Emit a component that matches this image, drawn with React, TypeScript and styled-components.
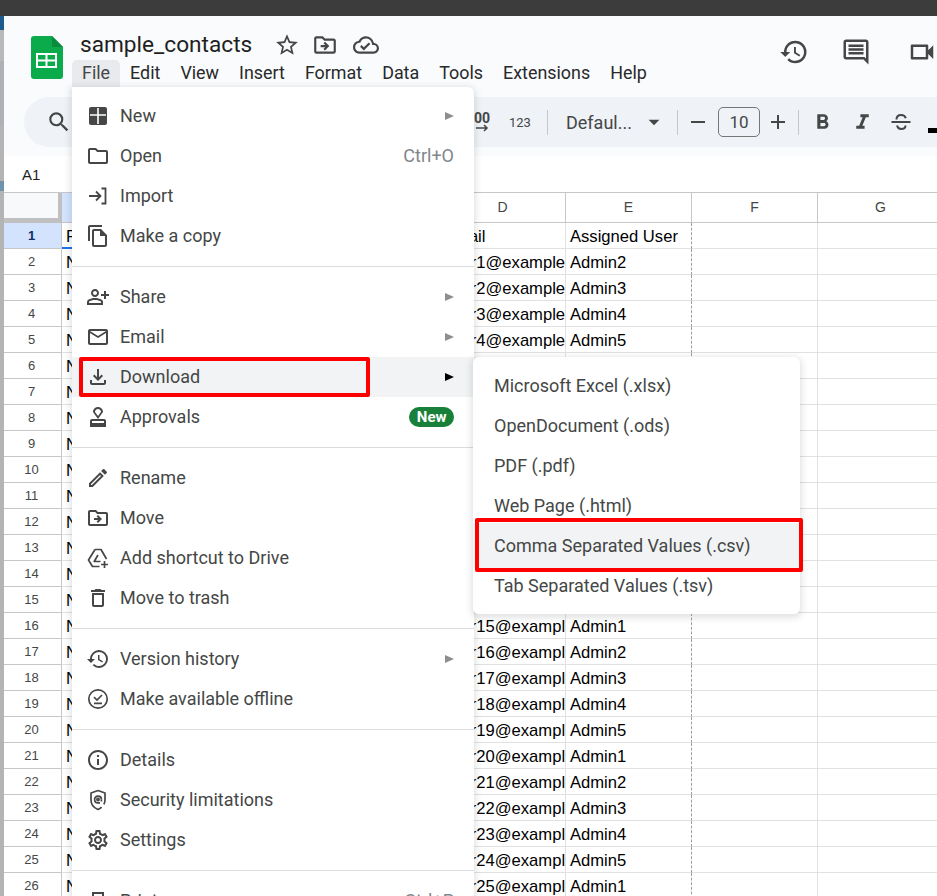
import React from "react";
import styled, { createGlobalStyle } from "styled-components";
import {
  MdStarBorder, MdOutlineDriveFileMove, MdOutlineCloudDone, MdHistory, MdOutlineComment, MdOutlineVideocam,
  MdSearch, MdOutlineFolder, MdOutlineFileCopy, MdOutlinePersonAddAlt, MdOutlineEmail, MdOutlineFileDownload,
  MdOutlineApproval, MdOutlineEdit, MdOutlineDelete, MdInfoOutline,
  MdOutlineSettings, MdOutlinePrint, MdFormatBold, MdFormatItalic, MdRemove, MdAdd, MdArrowDropDown,
} from "react-icons/md";

const Global = createGlobalStyle`
  html, body { margin: 0; padding: 0; background: #fff; }
  * { box-sizing: border-box; }
`;

const Page = styled.div`
  position: relative; width: 937px; height: 896px; overflow: hidden; display: flex; flex-direction: column;
  font-family: Roboto, "Liberation Sans", sans-serif; color: #444746; background: #fff;
`;
const TopBar = styled.div`flex: none; height: 16px; background: #3c3c3c;`;
const Body = styled.div`flex: 1; display: flex; min-height: 0;`;
const LeftStrip = styled.div`
  flex: none; width: 4px;
  background: linear-gradient(#1f5a8c 0, #1f5a8c 14px, #b9b9b9 14px, #b9b9b9 45px, #aeb2b6 45px, #aeb2b6 110px, #b4b4b4 110px, #b4b4b4 165px, #6f93ad 165px, #6f93ad 175px, #b4b4b4 175px, #b4b4b4 880px);
`;
const Sheet = styled.div`flex: 1; min-width: 0; display: flex; flex-direction: column;`;
const Header = styled.header`flex: none; height: 140px; background: #f9fbfd; display: flex; flex-direction: column;`;
const HeaderTop = styled.div`flex: none; height: 81px; display: flex; padding-left: 27px; position: relative;`;
const LogoWrap = styled.div`flex: none; width: 32px; margin-top: 20px; height: 43px;`;
const TitleBlock = styled.div`flex: none; margin-left: 9px; display: flex; flex-direction: column;`;
const TitleRow = styled.div`height: 44px; padding: 14px 0 0 8px; display: flex; align-items: center;`;
const Title = styled.span`font-size: 22.65px; line-height: 30px; color: #1f1f1f;`;
const TitleIcons = styled.div`
  display: flex; align-items: center; gap: 12px; margin-left: 22px; color: #444746; font-size: 26px;
  & svg:last-child { margin-left: 3px; }
`;
const MenuBar = styled.nav`display: flex; height: 27px;`;
const MenuItem = styled.span<{ $active?: boolean }>`
  padding: 0 10px; font-size: 17.9px; line-height: 25px; height: 27px; border-radius: 5px 5px 0 0;
  color: ${p => (p.$active ? "#444746" : "#28292a")};
  background: ${p => (p.$active ? "#e8eaed" : "transparent")};
`;
const ActionIcons = styled.div`
  position: absolute; left: 775px; top: 21px; display: flex; align-items: center; gap: 32px; font-size: 30px; color: #444746;
  & svg { display: block; }
  & svg:last-child { margin-left: 4px; }
`;
const Toolbar = styled.div`
  flex: none; height: 50px; margin-left: 20px; padding-left: 22px; background: #eff2f7; border-radius: 25px 0 0 25px;
  display: flex; align-items: center; overflow: hidden; color: #444746;
`;
const SearchIcon = styled.span`flex: none; font-size: 26px; display: flex; margin-right: 401px;`;
const DecimalIcon = styled.span`
  flex: none; width: 18px; display: flex; flex-direction: column; align-items: center; font-size: 14px; font-weight: 700; line-height: 12px;
  & svg { display: block; }
`;
const Numeric = styled.span`flex: none; margin-left: 18px; font-size: 13px; width: 25px;`;
const ToolDivider = styled.span<{ $left: number }>`flex: none; width: 1px; height: 25px; background: #c7c7c7; margin-left: ${p => p.$left}px;`;
const FontName = styled.span`flex: none; margin-left: 18px; font-size: 18px; width: 67px; white-space: nowrap;`;
const ToolIcon = styled.span<{ $left: number; $size?: number }>`
  flex: none; margin-left: ${p => p.$left}px; font-size: ${p => p.$size ?? 24}px; display: flex;
`;
const SizeBox = styled.span`
  flex: none; width: 42px; height: 30px; margin-left: 8px; border: 1px solid #747775; border-radius: 5px;
  display: flex; align-items: center; justify-content: center; font-size: 17px;
`;
const UnderlineBar = styled.span`flex: none; width: 16px; height: 5px; background: #000; margin: 16px 0 0 15px;`;
const FormulaBar = styled.div`
  flex: none; height: 36px; background: #fff; padding-left: 18px; display: flex; align-items: center;
  font: 15px "Liberation Sans", Arial, sans-serif; color: #1f1f1f;
`;
const Grid = styled.div`
  flex: 1; min-height: 0; overflow: hidden; display: grid; grid-template-columns: 58px repeat(7, 126px);
  grid-auto-rows: 26px; grid-template-rows: 30px; border-top: 1px solid #c7c7c7;
  font: 16.6px "Liberation Sans", Arial, sans-serif; color: #000;
`;
const Corner = styled.div`background: #f8f9fa; border-right: 4px solid #c0c0c0; border-bottom: 5px solid #c0c0c0;`;
const ColHead = styled.div<{ $selected?: boolean }>`
  display: flex; align-items: center; justify-content: center; padding-bottom: 1px; font-size: 14px; color: #444746;
  background: ${p => (p.$selected ? "#d3e3fd" : "#fff")};
  border-right: 1px solid #c7c7c7; border-bottom: 1px solid #c7c7c7;
`;
const RowHead = styled.div<{ $selected?: boolean }>`
  display: flex; align-items: center; justify-content: center; padding: 0 2px 1px 0; font-size: 13px;
  background: ${p => (p.$selected ? "#d3e3fd" : "#fff")};
  color: ${p => (p.$selected ? "#0b2f6b" : "#444746")};
  font-weight: ${p => (p.$selected ? 700 : 400)};
  border-right: 1px solid #c7c7c7; border-bottom: 1px solid #c7c7c7;
`;
const Cell = styled.div<{ $active?: boolean; $dashed?: boolean }>`
  padding-left: 4px; line-height: 27px; white-space: nowrap; overflow: hidden;
  border-bottom: ${p => (p.$active ? "2px solid #1a73e8" : "1px solid #e1e1e1")};
  border-right: ${p => (p.$dashed ? "1px dashed #9aa0a6" : "1px solid #e1e1e1")};
`;
const Menu = styled.div`
  position: absolute; left: 72px; top: 87px; width: 402px; height: 840px; padding-top: 9px; background: #fff;
  border-radius: 0 6px 6px 6px; box-shadow: 0 2px 6px 2px rgba(60,64,67,.15);
`;
const Row = styled.div<{ $hover?: boolean }>`
  position: relative; height: 40px; display: flex; align-items: center; padding: 0 20px 0 14px; font-size: 18px; color: #444746;
  background: ${p => (p.$hover ? "#f1f3f4" : "transparent")};
`;
const RowIcon = styled.span`flex: none; width: 24px; height: 24px; margin-right: 10px; font-size: 24px; display: flex; align-items: center; justify-content: center; color: #444746;`;
const RowLabel = styled.span`flex: 1; white-space: nowrap; line-height: 20px;`;
const Shortcut = styled.span`color: #80868b; font-size: 18px; line-height: 20px;`;
const Arrow = styled.span<{ $dark?: boolean }>`
  width: 0; height: 0; border-style: solid; border-width: 4.5px 0 4.5px 9px;
  border-color: transparent transparent transparent ${p => (p.$dark ? "#000" : "#8b8f92")};
`;
const Badge = styled.span`
  background: #188038; color: #fff; font-size: 15px; font-weight: 700; line-height: 20px; padding: 0 7.5px; border-radius: 10px;
`;
const Separator = styled.div`height: 1px; background: #dadce0; margin: 10px 0;`;
const Annotation = styled.span<{ $w: number; $h: number; $left: number; $top: number }>`
  position: absolute; left: ${p => p.$left}px; top: ${p => p.$top}px; width: ${p => p.$w}px; height: ${p => p.$h}px;
  border: 4px solid #f00; border-radius: 2px;
`;
const SubMenu = styled.div`
  position: absolute; left: 473px; top: 357px; width: 327px; height: 257px; padding-top: 9px; background: #fff;
  border-radius: 6px; box-shadow: 0 2px 6px 2px rgba(60,64,67,.15);
`;
const SubRow = styled.div<{ $hover?: boolean }>`
  position: relative; height: 40px; padding: 0 0 2px 21px; display: flex; align-items: center; font-size: 18px; color: #444746; white-space: nowrap;
  background: ${p => (p.$hover ? "#f1f3f4" : "transparent")};
  box-shadow: ${p => (p.$hover ? "0 -3px 0 #f1f3f4, 0 2px 0 #f1f3f4" : "none")};
`;

const Logo = () => (
  <svg width="32" height="43" viewBox="0 0 32 43">
    <path d="M3 0H21L32 11V40a3 3 0 0 1-3 3H3a3 3 0 0 1-3-3V3a3 3 0 0 1 3-3Z" fill="#0bab4b" />
    <path d="M21 0L32 11H21Z" fill="#0a8a3c" />
    <path d="M5 17H26V32H5Z M7 19V23.5H14.5V19Z M16.5 19V23.5H24V19Z M7 25.5V30H14.5V25.5Z M16.5 25.5V30H24V25.5Z" fill="#fff" fillRule="evenodd" />
  </svg>
);
const NewIcon = () => (
  <svg width="18" height="18" viewBox="0 0 18 18">
    <rect width="18" height="18" rx="2" fill="#444746" />
    <path d="M1 8H17M9 1V17" stroke="#fff" strokeWidth="1.6" />
  </svg>
);
const ImportIcon = () => (
  <svg width="22" height="22" viewBox="0 0 22 22" fill="none" stroke="#444746" strokeWidth="1.8">
    <path d="M2 11H13M9 6.5L13.5 11L9 15.5M14.5 3.5H18.5V18.5H14.5" />
  </svg>
);
const ShieldIcon = () => (
  <svg width="22" height="24" viewBox="0 0 22 24" fill="none" stroke="#444746" strokeWidth="1.7">
    <path d="M11 2.5L4 5V12C4 16.3 6.8 19.8 11 21.5C12.4 21 13.6 20.2 14.6 19.2M11 2.5L18 5V12C18 13.6 17.6 15.1 16.9 16.4" />
    <path d="M14.4 11.5C14.4 9.6 12.9 8.1 11 8.1S7.6 9.6 7.6 11.5S9.1 14.9 11 14.9H13" />
    <path d="M14.4 11.5V13.5" />
    <circle cx="11" cy="11.5" r="1.1" />
  </svg>
);
const DriveShortcutIcon = () => (
  <svg width="24" height="24" viewBox="0 0 24 24" fill="none" stroke="#444746" strokeWidth="1.7" strokeLinejoin="round">
    <path d="M9 3.5H15L20.5 13M9 3.5L2.5 14L6.5 20.5H13.5" />
    <path d="M12 9L8.2 15.5H14.5" />
    <path d="M18.5 15V22M15 18.5H22" />
  </svg>
);
const OfflineIcon = () => (
  <svg width="24" height="24" viewBox="0 0 24 24" fill="none" stroke="#444746" strokeWidth="1.7">
    <circle cx="12" cy="12" r="9.2" />
    <path d="M8 10.2L11 13L16 8M8 16.3H16" />
  </svg>
);
const StrikeIcon = () => (
  <svg width="24" height="24" viewBox="0 0 24 24" fill="none" stroke="#444746" strokeWidth="2">
    <path d="M2.5 12H21.5M7.5 9.5C7.5 6.5 9.5 5 12 5C14.5 5 16.2 6.2 16.8 8.2M8 15.5C8.7 18 10 19 12 19C14.5 19 16.5 17.8 16.5 15.5" />
  </svg>
);

const arrow = <Arrow />;
const columns = ["A", "B", "C", "D", "E", "F", "G"];
const rows = Array.from({ length: 27 }, (_, i) => i + 1);

const Item = ({ icon, label, right, hover, children }: { icon: React.ReactNode; label: string; right?: React.ReactNode; hover?: boolean; children?: React.ReactNode }) => (
  <Row $hover={hover}>
    <RowIcon>{icon}</RowIcon>
    <RowLabel>{label}</RowLabel>
    {right}
    {children}
  </Row>
);

export default function App() {
  return (
    <Page>
      <Global />
      <TopBar />
      <Body>
        <LeftStrip />
        <Sheet>
          <Header>
            <HeaderTop>
              <LogoWrap><Logo /></LogoWrap>
              <TitleBlock>
                <TitleRow>
                  <Title>sample_contacts</Title>
                  <TitleIcons><MdStarBorder /><MdOutlineDriveFileMove /><MdOutlineCloudDone /></TitleIcons>
                </TitleRow>
                <MenuBar>
                  {["File", "Edit", "View", "Insert", "Format", "Data", "Tools", "Extensions", "Help"].map((m, i) => (
                    <MenuItem key={m} $active={i === 0}>{m}</MenuItem>
                  ))}
                </MenuBar>
              </TitleBlock>
              <ActionIcons><MdHistory /><MdOutlineComment /><MdOutlineVideocam /></ActionIcons>
            </HeaderTop>
            <Toolbar>
              <SearchIcon><MdSearch /></SearchIcon>
              <DecimalIcon>
                00
                <svg width="14" height="8" viewBox="0 0 14 8" fill="none" stroke="#444746" strokeWidth="1.6"><path d="M1 4H12M9 1L12 4L9 7" /></svg>
              </DecimalIcon>
              <Numeric>123</Numeric>
              <ToolDivider $left={13} />
              <FontName>Defaul...</FontName>
              <ToolIcon $left={8} $size={26}><MdArrowDropDown /></ToolIcon>
              <ToolDivider $left={10} />
              <ToolIcon $left={8}><MdRemove /></ToolIcon>
              <SizeBox>10</SizeBox>
              <ToolIcon $left={6}><MdAdd /></ToolIcon>
              <ToolDivider $left={8} />
              <ToolIcon $left={11} $size={25}><MdFormatBold /></ToolIcon>
              <ToolIcon $left={15} $size={25}><MdFormatItalic /></ToolIcon>
              <ToolIcon $left={14}><StrikeIcon /></ToolIcon>
              <UnderlineBar />
            </Toolbar>
          </Header>
          <FormulaBar>A1</FormulaBar>
          <Grid>
            <Corner />
            {columns.map((c, i) => <ColHead key={c} $selected={i === 0}>{c}</ColHead>)}
            {rows.map(n => (
              <React.Fragment key={n}>
                <RowHead $selected={n === 1}>{n}</RowHead>
                <Cell $active={n === 1}>{n === 1 ? "First Name" : `Name${n - 1}`}</Cell>
                <Cell />
                <Cell />
                <Cell>{n === 1 ? "Email" : `user${n - 1}@example.com`}</Cell>
                <Cell $dashed>{n === 1 ? "Assigned User" : `Admin${(n - 1) % 5 + 1}`}</Cell>
                <Cell />
                <Cell />
              </React.Fragment>
            ))}
          </Grid>
        </Sheet>
      </Body>
      <Menu>
        <Item icon={<NewIcon />} label="New" right={arrow} />
        <Item icon={<MdOutlineFolder />} label="Open" right={<Shortcut>Ctrl+O</Shortcut>} />
        <Item icon={<ImportIcon />} label="Import" />
        <Item icon={<MdOutlineFileCopy />} label="Make a copy" />
        <Separator />
        <Item icon={<MdOutlinePersonAddAlt />} label="Share" right={arrow} />
        <Item icon={<MdOutlineEmail />} label="Email" right={arrow} />
        <Item icon={<MdOutlineFileDownload />} label="Download" right={<Arrow $dark />} hover>
          <Annotation $left={7} $top={0} $w={291} $h={40} />
        </Item>
        <Item icon={<MdOutlineApproval />} label="Approvals" right={<Badge>New</Badge>} />
        <Separator />
        <Item icon={<MdOutlineEdit />} label="Rename" />
        <Item icon={<MdOutlineDriveFileMove />} label="Move" />
        <Item icon={<DriveShortcutIcon />} label="Add shortcut to Drive" />
        <Item icon={<MdOutlineDelete />} label="Move to trash" />
        <Separator />
        <Item icon={<MdHistory />} label="Version history" right={arrow} />
        <Item icon={<OfflineIcon />} label="Make available offline" />
        <Separator />
        <Item icon={<MdInfoOutline />} label="Details" />
        <Item icon={<ShieldIcon />} label="Security limitations" />
        <Item icon={<MdOutlineSettings />} label="Settings" />
        <Separator />
        <Item icon={<MdOutlinePrint />} label="Print" right={<Shortcut>Ctrl+P</Shortcut>} />
      </Menu>
      <SubMenu>
        <SubRow>Microsoft Excel (.xlsx)</SubRow>
        <SubRow>OpenDocument (.ods)</SubRow>
        <SubRow>PDF (.pdf)</SubRow>
        <SubRow>Web Page (.html)</SubRow>
        <SubRow $hover>
          Comma Separated Values (.csv)
          <Annotation $left={2} $top={-8} $w={328} $h={54} />
        </SubRow>
        <SubRow>Tab Separated Values (.tsv)</SubRow>
      </SubMenu>
    </Page>
  );
}
